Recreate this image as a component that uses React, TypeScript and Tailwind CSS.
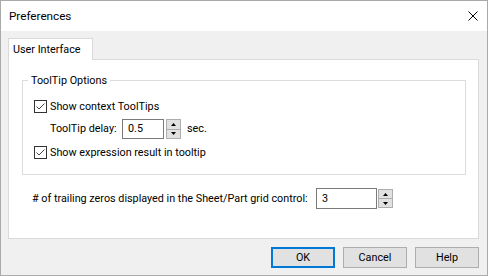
import React from 'react';

const Triangle = (props: { dir: 'up' | 'down' }) => (
  <svg width="5" height="3" viewBox="0 0 5 3">
    {props.dir === 'up'
      ? <polygon points="0,3 2.5,0 5,3" fill="#000" />
      : <polygon points="0,0 2.5,3 5,0" fill="#000" />}
  </svg>
);

const Spinner = (props: { height: string }) => (
  <div className={`flex flex-col w-[15px] ${props.height}`}>
    <div className="flex-1 flex items-center justify-center bg-[#e1e1e1] border border-[#adadad]">
      <Triangle dir="up" />
    </div>
    <div className="flex-1 flex items-center justify-center bg-[#e1e1e1] border border-t-0 border-[#adadad]">
      <Triangle dir="down" />
    </div>
  </div>
);

const CheckBox = (props: { label: string }) => (
  <div className="flex items-center h-[13px]">
    <div className="w-[13px] h-[13px] border border-[#333] bg-white flex items-center justify-center">
      <svg width="11" height="11" viewBox="0 0 11 11">
        <polyline points="1.5,5.5 4,8 9.5,2.5" fill="none" stroke="#444" strokeWidth="1" />
      </svg>
    </div>
    <span className="ml-[3px]">{props.label}</span>
  </div>
);

const Button = (props: { label: string; isDefault?: boolean }) => (
  <div
    className={`w-[64px] h-[21px] flex items-center justify-center bg-[#e1e1e1] ${
      props.isDefault ? 'border-2 border-[#0078d7]' : 'border border-[#adadad]'
    }`}
  >
    {props.label}
  </div>
);

export default function App() {
  return (
    <div className="w-[488px] h-[276px] border border-[#aaaaaa] bg-[#f0f0f0] flex flex-col font-['Roboto',sans-serif] text-[10.8px] text-black leading-[14px]">
      {/* title bar */}
      <div className="h-[30px] bg-white flex items-center justify-between pl-[8px] pr-[9px] shrink-0">
        <span className="text-[11.7px]">Preferences</span>
        <svg width="10" height="10" viewBox="0 0 10 10">
          <line x1="0.5" y1="0.5" x2="9.5" y2="9.5" stroke="#000" strokeWidth="1" />
          <line x1="9.5" y1="0.5" x2="0.5" y2="9.5" stroke="#000" strokeWidth="1" />
        </svg>
      </div>

      <div className="pl-[7px] pr-[8px] pt-[7px] flex flex-col">
        {/* tab strip */}
        <div className="flex">
          <div className="relative z-10 w-[85px] h-[22px] -mb-[1px] bg-white border border-b-0 border-[#d9d9d9] flex items-center pl-[4px]">
            User Interface
          </div>
        </div>

        {/* tab panel */}
        <div className="h-[180px] bg-white border border-[#d9d9d9] flex flex-col">
          <div className="mt-[20px] ml-[13px] mr-[12px] h-[95px] border border-[#dcdcdc] flex flex-col">
            <span className="-mt-[7px] ml-[5px] px-[3px] bg-white w-fit">ToolTip Options</span>
            <div className="mt-[12px] ml-[11px]">
              <CheckBox label="Show context ToolTips" />
            </div>
            <div className="mt-[6px] ml-[27px] flex items-center">
              <span className="w-[72px]">ToolTip delay:</span>
              <div className="w-[42px] h-[20px] border border-[#7a7a7a] bg-white flex items-center pl-[5px]">0.5</div>
              <div className="ml-[2px]">
                <Spinner height="h-[20px]" />
              </div>
              <span className="ml-[6px]">sec.</span>
            </div>
            <div className="mt-[7px] ml-[11px]">
              <CheckBox label="Show expression result in tooltip" />
            </div>
          </div>

          <div className="mt-[13px] ml-[23px] flex items-center">
            <span className="w-[284px]">
              # of trailing zeros displayed in the Sheet/Part grid control:
            </span>
            <div className="w-[61px] h-[21px] border border-[#7a7a7a] bg-white flex items-center pl-[5px]">3</div>
            <div className="ml-[1px]">
              <Spinner height="h-[19px]" />
            </div>
          </div>
        </div>

        {/* buttons */}
        <div className="mt-[8px] flex justify-end gap-[8px]">
          <Button label="OK" isDefault />
          <Button label="Cancel" />
          <Button label="Help" />
        </div>
      </div>
    </div>
  );
}
